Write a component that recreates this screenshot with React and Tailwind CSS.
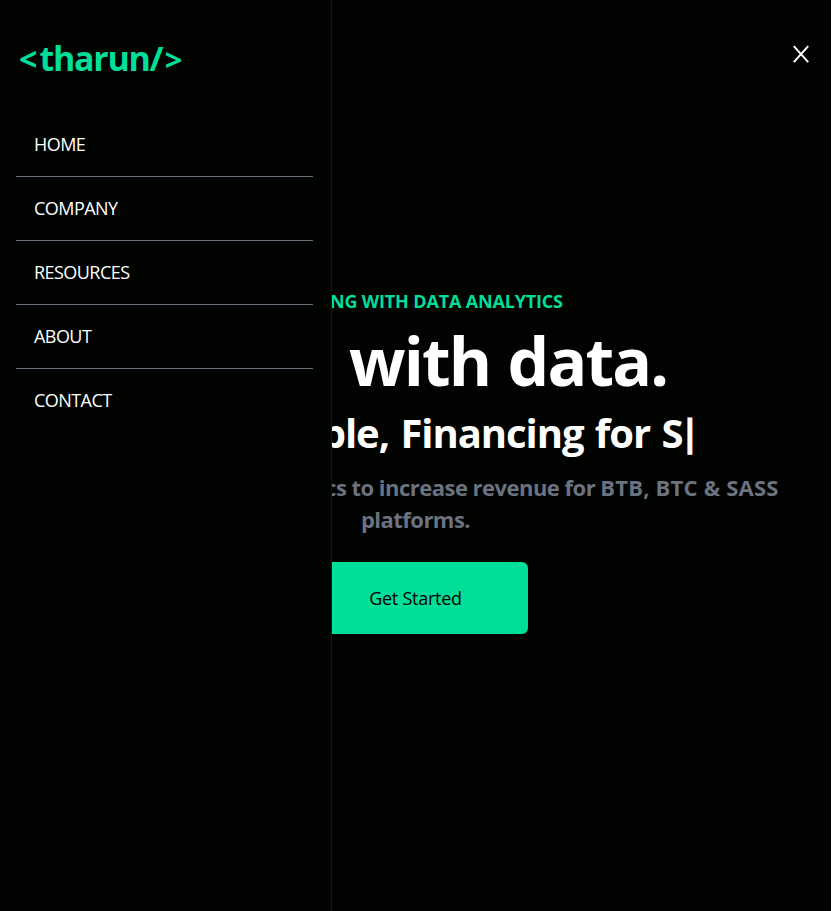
import React from 'react';

const links = ['HOME', 'COMPANY', 'RESOURCES', 'ABOUT', 'CONTACT'];

function Drawer() {
  return (
    <aside className="fixed left-0 top-0 h-full w-[332px] border-r border-r-[#111827] bg-[#000300]">
      <h1 className="mt-[39px] ml-[19px] h-[38px] w-fit whitespace-nowrap text-[34px] leading-[38px] font-bold tracking-[-0.75px] text-[#00df9a]">
        <span className="mr-[3px] text-[32px]">&lt;</span><span className="tracking-[-1.3px]">tharun</span><span className="mr-[2px]">/</span><span className="text-[31px]">&gt;</span>
      </h1>
      <ul className="mt-[36px] pl-4 pr-[18px]">
        {links.map((label) => (
          <li key={label} className="h-16 border-b border-[#6b7280] pl-[18px] text-[18px] leading-[62px] tracking-[-0.55px] last:border-b-0">
            <span>{label}</span>
          </li>
        ))}
      </ul>
    </aside>
  );
}

export default function App() {
  return (
    <div className="h-[911px] w-full overflow-hidden bg-white font-['Open_Sans','Noto_Sans',sans-serif] text-white">
      <div className="flex h-full w-[831px] flex-col bg-[#000300]">
        <header className="flex h-[108px] items-center justify-end pr-5">
          <svg width="20" height="20" viewBox="0 0 20 20" fill="none" stroke="white" strokeWidth="2">
            <path d="M2.8 2.2 17.2 18.2M17.2 2.2 2.8 18.2" />
          </svg>
        </header>
        <main className="flex flex-col items-center pt-[180px] text-center font-bold">
          <p className="h-[27px] whitespace-nowrap text-[18px] leading-[27px] tracking-[-0.16px] text-[#00df9a]"><span>GROWING WITH DATA ANALYTICS</span></p>
          <h2 className="mt-[9px] h-[72px] whitespace-nowrap text-[66px] leading-[72px] tracking-[-1.85px] [word-spacing:2px]"><span className="mr-2 pl-px tracking-[-4px]">Grow</span><span> with data.</span></h2>
          <p className="mt-[14px] h-[45px] whitespace-nowrap pr-[4px] text-[40px] leading-[45px] tracking-[-1.05px] [word-spacing:2px]"><span>Fast, Flexible, Financing for S</span><span className="ml-[2px] font-['Roboto',sans-serif] text-[42px] tracking-normal [-webkit-text-stroke:1.2px_white]">|</span></p>
          <p className="mt-4 whitespace-nowrap text-[22px] leading-8 tracking-[-0.52px] text-[#6b7280]">
            <span className="tracking-[-0.37px]">Monitor your data </span><span>analytics to increase revenue for </span><span className="tracking-[0.2px]">BTB, BTC &amp; SASS</span><br /><span>platforms.</span>
          </p>
          <button className="mt-[27px] h-[72px] w-[225px] rounded-md bg-[#00df9a] text-[18px] font-medium tracking-[-0.25px] text-black"><span>Get Started</span></button>
        </main>
      </div>
      <Drawer />
    </div>
  );
}
